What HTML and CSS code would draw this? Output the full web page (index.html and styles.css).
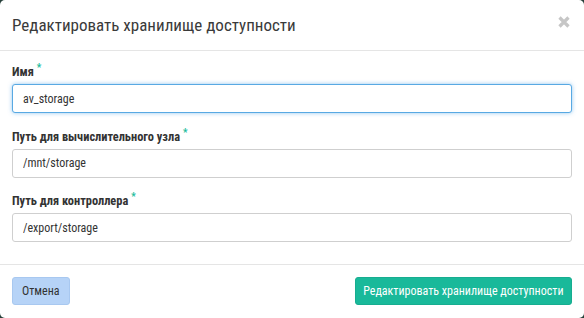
FILE: index.html
```html
<!DOCTYPE html>
<html lang="ru">
<head>
<meta charset="utf-8">
<link rel="stylesheet" href="styles.css">
</head>
<body>
<div class="modal">
  <div class="modal-header">
    <h4 class="modal-title">Редактировать хранилище доступности</h4>
    <button class="close" type="button" aria-label="Закрыть">
      <svg width="12" height="12" viewBox="0 0 12 12"><path d="M1.5 1.5 L10.5 10.5 M10.5 1.5 L1.5 10.5" stroke="#c6c6c6" stroke-width="3.2" stroke-linecap="butt"/></svg>
    </button>
  </div>
  <div class="modal-body">
    <div class="form-group">
      <label class="label">Имя<span class="req">*</span></label>
      <input class="input focused" type="text" value="av_storage">
    </div>
    <div class="form-group">
      <label class="label">Путь для вычислительного узла<span class="req">*</span></label>
      <input class="input" type="text" value="/mnt/storage">
    </div>
    <div class="form-group">
      <label class="label">Путь для контроллера<span class="req">*</span></label>
      <input class="input" type="text" value="/export/storage">
    </div>
  </div>
  <div class="modal-footer">
    <button class="btn btn-cancel" type="button">Отмена</button>
    <button class="btn btn-primary" type="button">Редактировать хранилище доступности</button>
  </div>
</div>
</body>
</html>
```

FILE: styles.css
```css
html, body {
  margin: 0;
  padding: 0;
  background: #27403a;
}
body {
  font-family: Roboto, "Liberation Sans", sans-serif;
  font-stretch: condensed;
  color: #333;
}
.modal {
  width: 584px;
  height: 318px;
  background: #fff;
  border-radius: 5px;
  display: flex;
  flex-direction: column;
}
.modal-header {
  height: 51px;
  box-sizing: border-box;
  border-bottom: 1px solid #e5e5e5;
  display: flex;
  align-items: center;
  justify-content: space-between;
  padding: 0 14px 0 12px;
}
.modal-title {
  margin: 0;
  font-size: 17px;
  font-weight: normal;
  color: #3a3a3a;
  line-height: 20px;
}
.close {
  background: none;
  border: 0;
  padding: 0;
  width: 12px;
  height: 12px;
  display: flex;
  margin-top: -6px;
}
.modal-body {
  padding: 12px 12px 0;
  height: 213px;
  box-sizing: border-box;
}
.form-group {
  margin-bottom: 14.5px;
  display: flex;
  flex-direction: column;
}
.form-group:last-child {
  margin-bottom: 0;
}
.label {
  font-size: 12.4px;
  font-weight: bold;
  color: #333;
  line-height: 17px;
  margin-bottom: 4px;
}
.req {
  color: #1abc9c;
  font-size: 10px;
  line-height: 10px;
  vertical-align: top;
  margin-left: 3px;
}
.input {
  height: 29px;
  box-sizing: border-box;
  border: 1px solid #cfcfcf;
  border-radius: 3px;
  padding: 0 10px;
  font-family: inherit;
  font-stretch: condensed;
  font-size: 12px;
  color: #333;
  outline: none;
  background: #fff;
}
.input.focused {
  border-color: #58a9e3;
  box-shadow: 0 0 4px rgba(102, 175, 233, 0.7);
}
.modal-footer {
  border-top: 1px solid #e5e5e5;
  padding: 12px;
  display: flex;
  justify-content: space-between;
  align-items: flex-start;
  flex: 1;
}
.btn {
  height: 28px;
  border-radius: 3px;
  font-family: inherit;
  font-stretch: condensed;
  font-size: 12px;
  cursor: pointer;
}
.btn-cancel {
  padding: 0 9px;
  background: #b6d3f7;
  border: 1px solid #a8c8f0;
  color: #333;
}
.btn-primary {
  padding: 0 7.5px;
  background: #19b99a;
  border: 1px solid #17ad90;
  color: #fff;
}
```
